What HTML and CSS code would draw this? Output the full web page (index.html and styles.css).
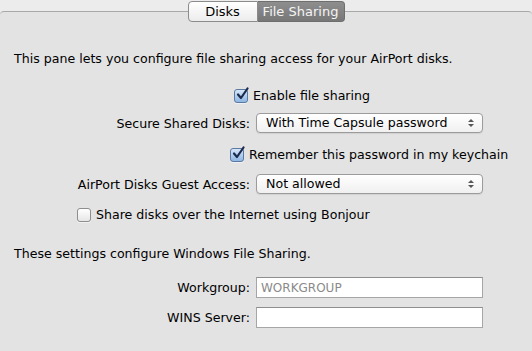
FILE: index.html
```html
<!DOCTYPE html>
<html>
<head>
    <title>AirPort Disks</title>
    <link rel="stylesheet" href="styles.css">
</head>
<body>
    <div class="tabs">
        <div class="tab">Disks</div>
        <div class="tab selected">File Sharing</div>
    </div>

    <div class="pane">
        <p class="intro">This pane lets you configure file sharing access for your AirPort disks.</p>

        <label class="check-row enable">
            <span class="checkbox checked">
                <svg viewBox="0 0 14 14" width="14" height="14"><path d="M3 7.5 L6 11 L12.5 1.5" fill="none" stroke="#1b2b4d" stroke-width="2.2" stroke-linecap="round" stroke-linejoin="round"/></svg>
            </span>
            Enable file sharing
        </label>

        <div class="form-row secure">
            <span class="label">Secure Shared Disks:</span>
            <div class="popup">With Time Capsule password<span class="arrows"></span></div>
        </div>

        <label class="check-row remember">
            <span class="checkbox checked">
                <svg viewBox="0 0 14 14" width="14" height="14"><path d="M3 7.5 L6 11 L12.5 1.5" fill="none" stroke="#1b2b4d" stroke-width="2.2" stroke-linecap="round" stroke-linejoin="round"/></svg>
            </span>
            Remember this password in my keychain
        </label>

        <div class="form-row guest">
            <span class="label">AirPort Disks Guest Access:</span>
            <div class="popup">Not allowed<span class="arrows"></span></div>
        </div>

        <label class="check-row bonjour">
            <span class="checkbox"></span>
            Share disks over the Internet using Bonjour
        </label>

        <p class="windows">These settings configure Windows File Sharing.</p>

        <div class="form-row field workgroup">
            <span class="label">Workgroup:</span>
            <input type="text" class="textfield" placeholder="WORKGROUP">
        </div>

        <div class="form-row field wins">
            <span class="label">WINS Server:</span>
            <input type="text" class="textfield">
        </div>
    </div>
</body>
</html>
```

FILE: styles.css
```css
body {
    margin: 0;
    background: #ececec;
    font-family: "DejaVu Sans", sans-serif;
    font-size: 12.6px;
    color: #000;
    height: 351px;
    overflow: hidden;
}

/* segmented tab control */
.tabs {
    display: flex;
    justify-content: center;
    padding-top: 1px;
    position: relative;
    z-index: 1;
    height: 21px;
}

.tab {
    height: 19px;
    line-height: 19px;
    width: 68px;
    text-align: center;
    font-size: 13px;
    border: 1px solid #8c8c8c;
    background: linear-gradient(#ffffff, #ececec);
    border-radius: 4px 0 0 4px;
}

.tab.selected {
    width: 86px;
    color: #f4f4f4;
    border-color: #6e6e6e;
    border-left: none;
    background: linear-gradient(#8e8e8e, #777777);
    border-radius: 0 4px 4px 0;
}

.pane {
    margin-top: -11px;
    border-top: 1px solid #a9a9a9;
    border-radius: 4px 4px 0 0;
    background: #e3e3e3;
    height: 340px;
    padding-top: 39px;
    box-sizing: border-box;
}

.intro, .windows {
    margin: 0;
    padding-left: 14px;
    height: 16px;
    line-height: 16px;
}

.windows {
    margin-top: 23px;
}

.check-row {
    display: flex;
    align-items: center;
    gap: 5px;
    height: 16px;
    line-height: 16px;
}

.enable { padding-left: 234px; margin-top: 21px; }
.remember { padding-left: 230px; margin-top: 14px; }
.bonjour { padding-left: 77px; margin-top: 13px; }

.checkbox {
    position: relative;
    width: 12px;
    height: 12px;
    border: 1px solid #8e8e8e;
    border-radius: 3px;
    background: linear-gradient(#ffffff, #e6e6e6);
    box-shadow: 0 1px 0 rgba(255,255,255,0.5);
}

.checkbox.checked {
    border-color: #5b7aa3;
    background: linear-gradient(#d6e6f8, #8fb6e3);
}

.checkbox svg {
    position: absolute;
    left: 0;
    top: -3px;
}

.form-row {
    display: grid;
    grid-template-columns: 250px 227px;
    column-gap: 6px;
    align-items: center;
}

.label {
    text-align: right;
}

.secure { margin-top: 9px; }
.guest { margin-top: 11px; }
.workgroup { margin-top: 15px; }
.wins { margin-top: 9px; }

.popup {
    position: relative;
    height: 18px;
    line-height: 18px;
    padding-left: 9px;
    border: 1px solid #9b9b9b;
    border-radius: 4px;
    background: linear-gradient(#ffffff, #f0f0f0);
    box-shadow: 0 1px 1px rgba(0,0,0,0.08);
}

.arrows {
    position: absolute;
    right: 8px;
    top: 5px;
    width: 0;
    height: 0;
    border-left: 3px solid transparent;
    border-right: 3px solid transparent;
    border-bottom: 3px solid #555;
}

.arrows::after {
    content: "";
    position: absolute;
    left: -3px;
    top: 5px;
    border-left: 3px solid transparent;
    border-right: 3px solid transparent;
    border-top: 3px solid #555;
}

.textfield {
    height: 21px;
    box-sizing: border-box;
    padding: 0 4px;
    border: 1px solid #a6a6a6;
    border-top-color: #8e8e8e;
    background: #fff;
    font-family: "DejaVu Sans", sans-serif;
    font-size: 12px;
    margin: 0;
    outline: none;
}

.textfield::placeholder {
    color: #8a8a8a;
}
```
